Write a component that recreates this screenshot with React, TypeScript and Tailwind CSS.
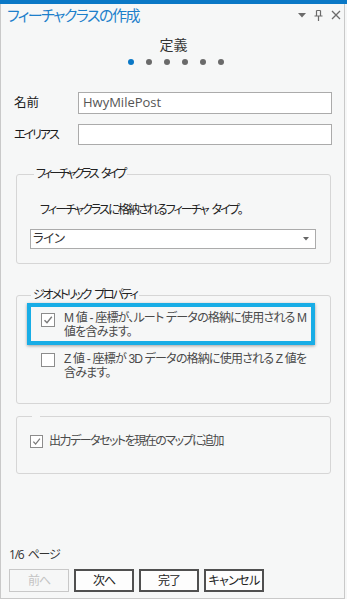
import React from "react";

const font = "font-['Open_Sans','Noto_Sans_CJK_JP',sans-serif] [font-feature-settings:'palt']";

function Sp({ w = 4 }: { w?: number }) {
  return <span className="inline-block" style={{ width: w }} />;
}

function Check({ checked, size = 14 }: { checked: boolean; size?: number }) {
  return (
    <div
      className="shrink-0 border border-[#8c8c8c] bg-white flex items-center justify-center"
      style={{ width: size, height: size }}
    >
      {checked && (
        <svg width={size - 4} height={size - 4} viewBox="0 0 10 10">
          <path d="M1.5 5.2 L4 7.8 L8.8 1.8" fill="none" stroke="#7a7a7a" strokeWidth="1.4" />
        </svg>
      )}
    </div>
  );
}

export default function App() {
  return (
    <div className={`w-[347px] h-[599px] flex flex-col bg-[#f6f7f7] ${font}`}>
      <div className="h-[4px] bg-[#0a78c6] shrink-0" />
      <div className="flex-1 flex flex-col border-l border-r border-b border-[#c9c9c9] mr-[2px] min-h-0">
        {/* header */}
        <div className="h-[22px] flex items-center justify-between pl-[6px] pr-[3px]">
          <span className="text-[15px] leading-[20px] tracking-[-1.5px] text-[#1d7fcb]">フィーチャクラスの作成</span>
          <div className="flex items-center gap-[8px] text-[#666]">
            <svg width="8" height="5" viewBox="0 0 8 5"><path d="M0 0 H8 L4 4.5Z" fill="#6b6b6b" /></svg>
            <svg width="9" height="11" viewBox="0 0 9 11">
              <path d="M2.5 0.5 V6 M6.5 0.5 V6 M2.5 0.5 H6.5 M0.5 6 H8.5 M4.5 6 V11" fill="none" stroke="#6b6b6b" strokeWidth="1.2" />
            </svg>
            <svg width="10" height="10" viewBox="0 0 10 10"><path d="M1 1 L9 9 M9 1 L1 9" stroke="#6b6b6b" strokeWidth="1.3" /></svg>
          </div>
        </div>
        {/* step */}
        <div className="mt-[10px] pl-[2px] text-center text-[14px] leading-[18px] text-[#333]">定義</div>
        <div className="mt-[5px] flex justify-center gap-[12px] pl-[6px]">
          <div className="w-[6px] h-[6px] rounded-full bg-[#0a78c6]" />
          <div className="w-[6px] h-[6px] rounded-full bg-[#6a6a6a]" />
          <div className="w-[6px] h-[6px] rounded-full bg-[#6a6a6a]" />
          <div className="w-[6px] h-[6px] rounded-full bg-[#6a6a6a]" />
          <div className="w-[6px] h-[6px] rounded-full bg-[#6a6a6a]" />
          <div className="w-[6px] h-[6px] rounded-full bg-[#6a6a6a]" />
        </div>
        {/* fields */}
        <div className="mt-[27px] flex items-center pl-[13px] pr-[12px]">
          <span className="w-[64px] text-[12.5px] text-[#1a1a1a]">名前</span>
          <div className="flex-1 h-[22px] border border-[#ababab] bg-white flex items-center px-[4px] text-[13px] text-[#555]">
            HwyMilePost
          </div>
        </div>
        <div className="mt-[10px] flex items-center pl-[13px] pr-[12px]">
          <span className="w-[64px] text-[12px] tracking-[-2px] text-[#1a1a1a]">エイリアス</span>
          <div className="flex-1 h-[21px] border border-[#ababab] bg-white" />
        </div>

        {/* fieldset 1 */}
        <fieldset className="mt-[22px] ml-[15px] mr-[13px] border border-[#d6d6d6] rounded-[3px] pl-[13px] pr-[14px] pb-[14px]">
          <legend className="ml-[4px] px-[2px] text-[12px] leading-[14px] tracking-[-2.8px] text-[#222] whitespace-nowrap">
            フィーチャクラス<Sp w={4} />タイプ
          </legend>
          <div className="mt-[21px] pl-[10px] text-[12px] leading-[16px] tracking-[-1.9px] text-[#222] whitespace-nowrap">
            フィーチャクラスに格納されるフィーチャ<Sp w={4} />タイプ。
          </div>
          <div className="mt-[11px] h-[20px] border border-[#ababab] bg-white flex items-center justify-between pl-[2px] pr-[6px] text-[12.5px] text-[#333]">
            <span className="tracking-[-0.5px]">ライン</span>
            <svg width="6" height="4" viewBox="0 0 6 4"><path d="M0 0 H6 L3 3.5Z" fill="#666" /></svg>
          </div>
        </fieldset>

        {/* fieldset 2 */}
        <fieldset className="mt-[24px] ml-[15px] mr-[13px] border border-[#d6d6d6] rounded-[3px] pl-[10px] pr-[15px] pb-[23px]">
          <legend className="ml-[4px] px-[2px] text-[12px] leading-[14px] tracking-[-2.2px] text-[#222] whitespace-nowrap">
            ジオメトリック<Sp w={4} />プロパティ
          </legend>
          <div className="mt-[1px] border-[4px] border-[#18ade6] shadow-[0_1px_3px_rgba(0,0,0,0.35)] flex items-start pl-[10px] pt-[4px] pb-[2px] pr-[2px]">
            <div className="mt-[2px]"><Check checked size={14} /></div>
            <div className="ml-[9px] font-['Liberation_Sans','Noto_Sans_CJK_JP',sans-serif] text-[12px] leading-[14px] tracking-[-0.8px] text-[#4a4a4a] whitespace-nowrap">
              M 値 - 座標が、ルート データの格納に使用される M<br />値を含みます。
            </div>
          </div>
          <div className="mt-[7px] flex items-start pl-[14px]">
            <div className="mt-[1px]"><Check checked={false} size={14} /></div>
            <div className="ml-[9px] font-['Liberation_Sans','Noto_Sans_CJK_JP',sans-serif] text-[12px] leading-[14px] tracking-[-0.8px] text-[#4a4a4a] whitespace-nowrap">
              Z 値 - 座標が 3D データの格納に使用される Z 値を<br />含みます。
            </div>
          </div>
        </fieldset>

        {/* fieldset 3 */}
        <fieldset className="mt-[12px] ml-[15px] mr-[13px] border border-[#d6d6d6] rounded-[3px] pl-[13px] pr-[14px] pt-[17px] pb-[25px]">
          <legend className="ml-[2px] w-[8px] h-0 p-0" />
          <div className="flex items-center">
            <Check checked size={13} />
            <span className="ml-[6px] text-[12px] leading-[14px] tracking-[-1.5px] text-[#4a4a4a] whitespace-nowrap">出力データセットを現在のマップに追加</span>
          </div>
        </fieldset>

        <div className="flex-1" />
        <div className="pl-[8px] text-[12px] leading-[16px] tracking-[-1.2px] text-[#333] whitespace-nowrap">
          1/6<Sp w={4} />ページ
        </div>
        <div className="mt-[6px] mb-[6px] pl-[8px] flex gap-[5px]">
          <div className="w-[60px] h-[23px] border border-[#c8c8c8] flex items-center justify-center text-[12px] tracking-[-1px] text-[#c4c4c4]">前へ</div>
          <div className="w-[60px] h-[23px] border-2 border-[#505050] bg-[#fdfdfd] flex items-center justify-center text-[12px] tracking-[-1px] text-[#222]">次へ</div>
          <div className="w-[60px] h-[23px] border-2 border-[#505050] bg-[#fdfdfd] flex items-center justify-center text-[12px] tracking-[-1px] text-[#222]">完了</div>
          <div className="w-[60px] h-[23px] border-2 border-[#505050] bg-[#fdfdfd] flex items-center justify-center text-[12px] tracking-[-0.6px] text-[#222]">キャンセル</div>
        </div>
      </div>
    </div>
  );
}
